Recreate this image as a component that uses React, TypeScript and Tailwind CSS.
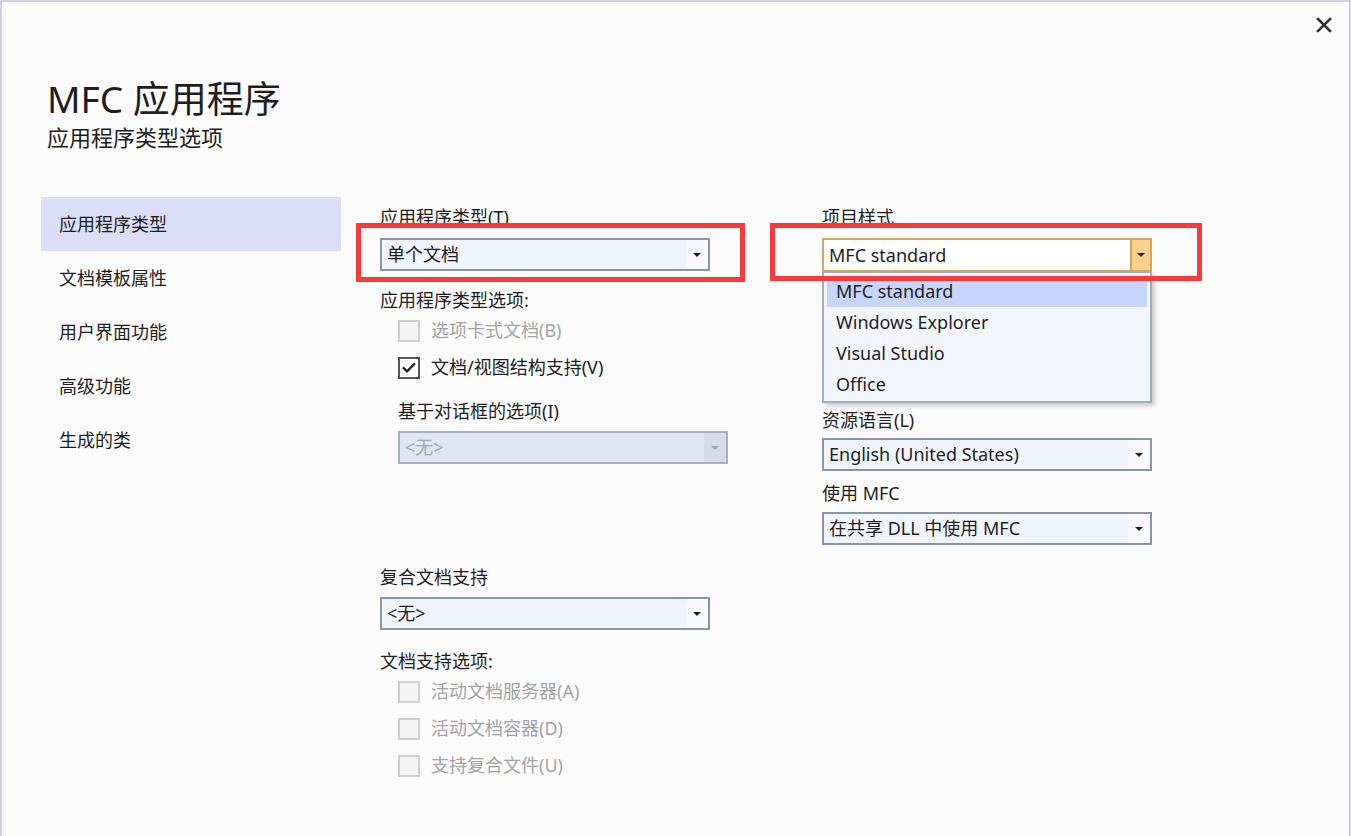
import { Check } from "lucide-react";

const font = { fontFamily: '"Noto Sans", "Noto Sans CJK SC", sans-serif' };

const ComboBox = ({ value, disabled = false }: { value: string; disabled?: boolean }) => (
  <div
    className={
      disabled
        ? "flex h-[33px] w-[330px] items-stretch border-2 border-[#a7b0c0] bg-[#dfe5f2]"
        : "flex h-[33px] w-[330px] items-stretch border-2 border-[#8b95a8] bg-[#f0f4fd]"
    }
  >
    <div
      className={
        disabled
          ? "flex flex-1 items-center pl-[5px] text-[18px] text-[#a4a9b3]"
          : "flex flex-1 items-center pl-[5px] text-[18px] text-[#1e1e1e]"
      }
    >
      {value}
    </div>
    <div
      className={
        disabled
          ? "flex w-[22px] items-center justify-center bg-[#d5dbe8]"
          : "flex w-[22px] items-center justify-center bg-[#f7f9fe]"
      }
    >
      <div
        className={
          disabled
            ? "h-0 w-0 border-x-[4px] border-t-[4px] border-x-transparent border-t-[#9da3ad]"
            : "h-0 w-0 border-x-[4px] border-t-[4px] border-x-transparent border-t-[#1e1e1e]"
        }
      />
    </div>
  </div>
);

const CheckRow = ({ label, checked = false, disabled = false }: { label: string; checked?: boolean; disabled?: boolean }) => (
  <div className="flex h-[37px] items-center pl-[18px]">
    <div
      className={
        disabled
          ? "flex h-[22px] w-[22px] items-center justify-center border-2 border-[#cfcfcf] bg-[#f4f4f4]"
          : "flex h-[22px] w-[22px] items-center justify-center border-2 border-[#555555] bg-white"
      }
    >
      {checked && <Check className="h-[16px] w-[16px] text-[#1e1e1e]" strokeWidth={3.5} />}
    </div>
    <span className={disabled ? "ml-[11px] text-[18px] text-[#a3a3a3]" : "ml-[11px] text-[18px] text-[#1e1e1e]"}>
      {label}
    </span>
  </div>
);

const Label = ({ children, className = "" }: { children: React.ReactNode; className?: string }) => (
  <div className={"flex h-6 items-center text-[18px] text-[#1e1e1e] " + className}>{children}</div>
);

export default function App() {
  const nav = ["应用程序类型", "文档模板属性", "用户界面功能", "高级功能", "生成的类"];
  const styles = ["MFC standard", "Windows Explorer", "Visual Studio", "Office"];

  return (
    <div
      style={font}
      className="relative h-[836px] w-[1351px] overflow-hidden border-x-2 border-t-2 border-[#cdd0e2] bg-[#fbfbfb] text-[#1e1e1e]"
    >
      {/* close button */}
      <button className="absolute right-[15px] top-[13px] flex h-5 w-5 items-center justify-center">
        <svg width="16" height="16" viewBox="0 0 16 16">
          <path d="M2 2 L14 14 M14 2 L2 14" stroke="#333" strokeWidth="2.6" strokeLinecap="square" />
        </svg>
      </button>

      {/* header */}
      <div className="pl-[45px] pt-[74px]">
        <h1 className="text-[37px] leading-[46px] text-[#1e1e1e]">MFC 应用程序</h1>
        <h2 className="text-[22px] leading-[30px] text-[#1e1e1e]">应用程序类型选项</h2>
      </div>

      {/* body */}
      <div className="mt-[45px] flex">
        <nav className="ml-[39px] w-[300px]">
          {nav.map((item, i) => (
            <div
              key={item}
              className={
                i === 0
                  ? "flex h-[54px] items-center bg-[#dadff7] pl-[18px] text-[18px]"
                  : "flex h-[54px] items-center pl-[18px] text-[18px]"
              }
            >
              {item}
            </div>
          ))}
        </nav>

        {/* column 1 */}
        <div className="ml-[39px] mt-[8px] w-[350px]">
          <Label>应用程序类型(T)</Label>
          <div className="mt-[9px]">
            <ComboBox value="单个文档" />
          </div>
          <Label className="mt-[17px]">应用程序类型选项:</Label>
          <CheckRow label="选项卡式文档(B)" disabled />
          <CheckRow label="文档/视图结构支持(V)" checked />
          <Label className="mt-[13px] pl-[18px]">基于对话框的选项(I)</Label>
          <div className="mt-[8px] pl-[18px]">
            <ComboBox value="<无>" disabled />
          </div>
          <Label className="mt-[101px]">复合文档支持</Label>
          <div className="mt-[8px]">
            <ComboBox value="<无>" />
          </div>
          <Label className="mt-[19px]">文档支持选项:</Label>
          <div className="flex flex-col">
            <CheckRow label="活动文档服务器(A)" disabled />
            <CheckRow label="活动文档容器(D)" disabled />
            <CheckRow label="支持复合文件(U)" disabled />
          </div>
        </div>

        {/* column 2 */}
        <div className="relative ml-[92px] mt-[8px] w-[330px]">
          <Label>项目样式</Label>
          <div className="relative mt-[9px]">
            <div className="flex h-[34px] w-[330px] items-stretch border-2 border-[#d6a65a] bg-white">
              <div className="flex flex-1 items-center pl-[5px] text-[18px]">MFC standard</div>
              <div className="flex w-[20px] items-center justify-center border-l-2 border-[#d6a65a] bg-[#fdd08e]">
                <div className="h-0 w-0 border-x-[4px] border-t-[4px] border-x-transparent border-t-[#1e1e1e]" />
              </div>
            </div>
            {/* open list */}
            <div className="absolute left-0 top-[33px] z-10 w-[330px] border-2 border-[#a3acbd] bg-[#f3f6fe] px-[3px] pb-[1px] pt-[3px] shadow-[3px_3px_4px_rgba(0,0,0,0.18)]">
              {styles.map((s, i) => (
                <div
                  key={s}
                  className={
                    i === 0
                      ? "flex h-[31px] items-center bg-[#c5d5fb] pl-[9px] text-[18px]"
                      : "flex h-[31px] items-center pl-[9px] text-[18px]"
                  }
                >
                  {s}
                </div>
              ))}
            </div>
          </div>
          <Label className="mt-[136px]">资源语言(L)</Label>
          <div className="mt-[6px]">
            <ComboBox value="English (United States)" />
          </div>
          <Label className="mt-[10px]">使用 MFC</Label>
          <div className="mt-[7px]">
            <ComboBox value="在共享 DLL 中使用 MFC" />
          </div>
        </div>
      </div>

      {/* annotation boxes */}
      <div className="pointer-events-none absolute left-[354px] top-[221px] z-20 h-[59px] w-[389px] border-[5px] border-[#f93a3a]" />
      <div className="pointer-events-none absolute left-[768px] top-[221px] z-20 h-[58px] w-[432px] border-[5px] border-[#f93a3a]" />
    </div>
  );
}
